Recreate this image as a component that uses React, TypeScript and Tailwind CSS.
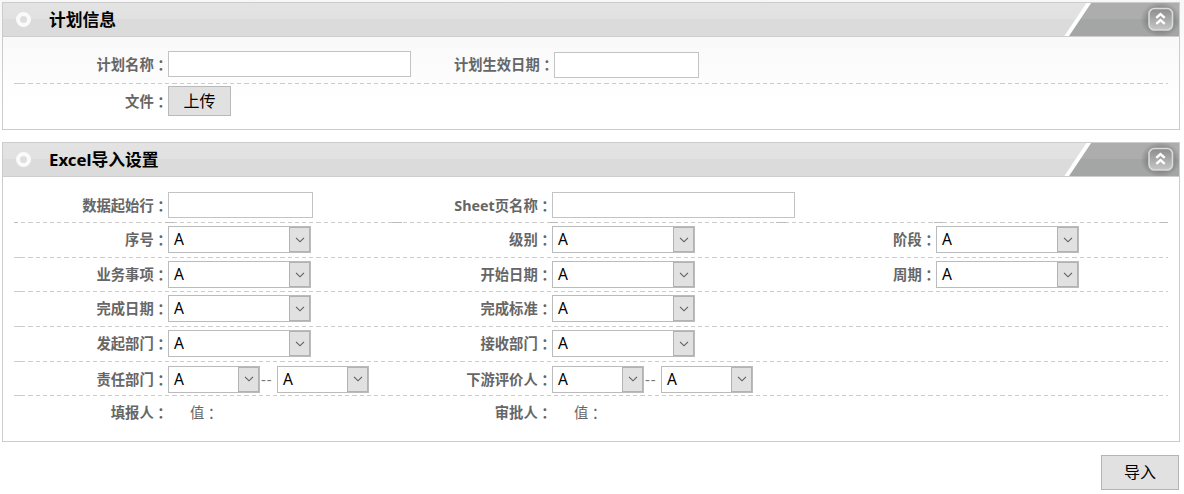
import type { ReactNode } from "react";

function Colon() {
  return <span className="relative top-px font-['Noto_Sans_CJK_TC',sans-serif]">：</span>;
}

function Toggle() {
  return (
    <svg width="120" height="33" viewBox="0 0 120 33" className="block">
      <defs>
        <radialGradient id="glow">
          <stop offset="0.5" stopColor="#747675" />
          <stop offset="1" stopColor="#747675" stopOpacity="0" />
        </radialGradient>
        <linearGradient id="knob" x1="0" y1="0" x2="0" y2="1">
          <stop offset="0" stopColor="#8c8c8c" />
          <stop offset="1" stopColor="#c6c6c6" />
        </linearGradient>
      </defs>
      <path d="M30 0H120V16H19Z" fill="#adadad" />
      <path d="M19 16H120V33H7Z" fill="#a4a6a5" />
      <path d="M30.500 -1L7 34" stroke="#fff" strokeWidth="4" />
      <ellipse cx="101.500" cy="16.500" rx="20" ry="18" fill="url(#glow)" opacity="0.9" />
      <rect x="90" y="5.500" width="23.500" height="21.500" rx="5.500" fill="url(#knob)" stroke="#dadada" strokeWidth="1.600" />
      <path d="M97.300 14.800L101.500 11L105.700 14.800M97.300 20.800L101.500 17L105.700 20.800" fill="none" stroke="#fff" strokeWidth="2.400" />
    </svg>
  );
}

function Panel({ title, className, children }: { title: string; className: string; children: ReactNode }) {
  return (
    <section className={`w-[1178px] border border-[#ccc] ${className}`}>
      <header className="flex h-[34px] items-center justify-between border-b border-[#cdcdcd] bg-[linear-gradient(#e3e3e3_0,#e1e1e1_16px,#dbdbdb_16px,#dbdbdb_100%)]">
        <div className="flex items-center">
          <span className="ml-[13px] size-[15px] rounded-full border-4 border-[#fafafa] bg-[#dedede]" />
          <h2 className="ml-[18px] text-[16.8px] font-bold leading-[33px] text-black">{title}</h2>
        </div>
        <Toggle />
      </header>
      {children}
    </section>
  );
}

function Dashes({ marks }: { marks?: "all" | "left" }) {
  return (
    <div className="relative h-px w-[1154px] bg-[repeating-linear-gradient(90deg,#ccc_0,#ccc_4.3px,transparent_4.3px,transparent_7.2px)]">
      {marks === "left" && <i className="absolute left-0 top-0 h-px w-2 bg-[#ccc]" />}
      {marks === "all" && (
        <>
          <i className="absolute top-0 left-0 h-px w-1 bg-[#bbb]" />
          <i className="absolute top-0 left-[151px] h-px w-[9px] bg-[#bbb]" />
          <i className="absolute top-0 left-[378px] h-px w-[10px] bg-[#bbb]" />
          <i className="absolute top-0 left-[535px] h-px w-[9px] bg-[#bbb]" />
          <i className="absolute top-0 left-[762px] h-px w-[10px] bg-[#bbb]" />
          <i className="absolute top-0 left-[920px] h-px w-[9px] bg-[#bbb]" />
          <i className="absolute top-0 left-[1146px] h-px w-2 bg-[#bbb]" />
        </>
      )}
    </div>
  );
}

function Field({ label, children }: { label: string; children?: ReactNode }) {
  return (
    <div className="flex w-[384px] shrink-0 items-center">
      <div className="w-[154px] shrink-0 whitespace-nowrap text-right text-[14.3px] font-bold leading-[20px] text-[#666]">
        {label}
        <Colon />
      </div>
      {children}
    </div>
  );
}

function Select({ width = "w-[143px]" }: { width?: string }) {
  return (
    <div className={`flex h-[27px] shrink-0 items-stretch justify-between border border-[#bbb] bg-white ${width}`}>
      <span className="pl-[5px] text-[15.5px] leading-[25px] text-black">A</span>
      <span className="flex w-[21px] items-center justify-center border border-[#b2b2b2] bg-[#e1e1e1]">
        <svg width="10" height="6" viewBox="0 0 10 6">
          <path d="M1 0.800L5 4.800L9 0.800" fill="none" stroke="#606060" strokeWidth="1.150" />
        </svg>
      </span>
    </div>
  );
}

function SelectPair() {
  return (
    <>
      <Select width="w-[92px]" />
      <span className="w-[17px] whitespace-nowrap pl-px text-[15px] leading-[20px] tracking-[1px] text-[#777]">--</span>
      <Select width="w-[92px]" />
    </>
  );
}

function Input({ className }: { className: string }) {
  return <input className={`block h-[26px] shrink-0 border border-[#c3c3c3] bg-white outline-none ${className}`} />;
}

function Value() {
  return (
    <span className="pl-[22px] text-[14.3px] leading-[20px] text-[#666]">
      值
      <Colon />
    </span>
  );
}

export default function App() {
  return (
    <main className="h-[494px] w-[1184px] overflow-hidden bg-[linear-gradient(#f7f7f7_0,#fefefe_90px,#fff_130px)] pl-[2px] pt-[2px] font-['Noto_Sans','Noto_Sans_CJK_SC',sans-serif]">
      <Panel title="计划信息" className="h-[128px] bg-[linear-gradient(#f9f9f9_35px,#fff_100px)]">
        <div className="pl-[11px] pt-[8px]">
          <div className="flex h-[38px] items-center gap-[2px]">
            <Field label="计划名称"><Input className="w-[243px]" /></Field>
            <Field label="计划生效日期"><Input className="mt-[2px] w-[145px]" /></Field>
          </div>
          <Dashes marks="left" />
          <div className="flex h-[34px] items-center">
            <Field label="文件">
              <button className="h-[30px] w-[63px] border border-[#b9b9b9] bg-[#e1e1e1] text-[16px] leading-[26px] text-black">上传</button>
            </Field>
          </div>
        </div>
      </Panel>

      <Panel title="Excel导入设置" className="mt-[12px] h-[300px] bg-white">
        <div className="pl-[11px] pt-[12px]">
          <div className="flex h-[33px] items-center pb-px">
            <Field label="数据起始行"><Input className="w-[145px]" /></Field>
            <Field label="Sheet页名称"><Input className="w-[243px]" /></Field>
          </div>
          <Dashes marks="all" />
          <div className="flex h-[34px] items-center pb-px">
            <Field label="序号"><Select /></Field>
            <Field label="级别"><Select /></Field>
            <Field label="阶段"><Select /></Field>
          </div>
          <Dashes marks="left" />
          <div className="flex h-[33px] items-center">
            <Field label="业务事项"><Select /></Field>
            <Field label="开始日期"><Select /></Field>
            <Field label="周期"><Select /></Field>
          </div>
          <Dashes marks="left" />
          <div className="flex h-[34px] items-center pb-px">
            <Field label="完成日期"><Select /></Field>
            <Field label="完成标准"><Select /></Field>
          </div>
          <Dashes marks="left" />
          <div className="flex h-[34px] items-center pb-px">
            <Field label="发起部门"><Select /></Field>
            <Field label="接收部门"><Select /></Field>
          </div>
          <Dashes marks="left" />
          <div className="flex h-[33px] items-center pt-px">
            <Field label="责任部门"><SelectPair /></Field>
            <Field label="下游评价人"><SelectPair /></Field>
          </div>
          <Dashes marks="left" />
          <div className="flex h-[34px] items-center pb-px">
            <Field label="填报人"><Value /></Field>
            <Field label="审批人"><Value /></Field>
          </div>
        </div>
      </Panel>

      <div className="flex w-[1177px] justify-end pt-[13px]">
        <button className="h-[35px] w-[78px] border border-[#b5b5b5] bg-[#e1e1e1] text-[16px] leading-[33px] text-black">导入</button>
      </div>
    </main>
  );
}
